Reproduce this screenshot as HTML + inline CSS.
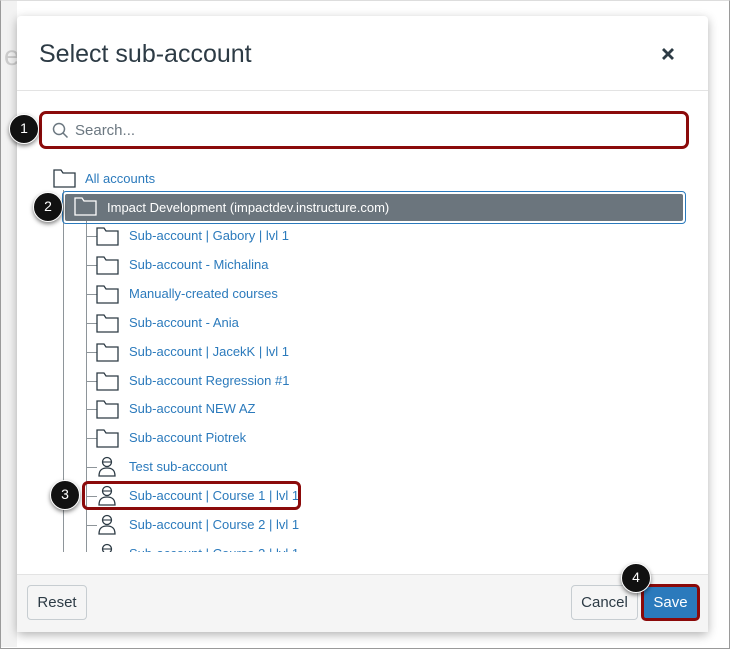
<!DOCTYPE html>
<html><head><style>
*{margin:0;padding:0;box-sizing:border-box}
body{width:730px;height:649px;background:#fff;font-family:"Liberation Sans",sans-serif;position:relative;overflow:hidden}
.frame{position:absolute;left:0;top:0;width:730px;height:649px;border:1px solid #9a9a9a;border-top-color:#ddd}
.bgcol{position:absolute;left:1px;top:1px;width:16px;height:646px;background:#f2f2f2}
.modal{position:absolute;left:17px;top:16px;width:691px;height:616px;background:#fff;border-radius:4px;box-shadow:0 3px 10px rgba(0,0,0,.3);overflow:hidden}
.title{position:absolute;left:22px;top:24px;font-size:25px;color:#2d3b45}
.x{position:absolute;left:644px;top:31px}
.hdiv{position:absolute;left:0;top:74px;width:100%;height:1px;background:#e3e3e3}
.search{position:absolute;left:22px;top:95px;width:650px;height:38px;border:3px solid #8b0a0a;border-radius:7px}
.search span{position:absolute;left:33px;top:8px;font-size:15px;color:#6b7780}
.a{position:absolute;font-size:13px;color:#2b7abc;white-space:nowrap}
.ic{position:absolute}
.vl{position:absolute;width:1px;background:#8e959a}
.hl{position:absolute;height:1px;background:#8e959a}
.badge{position:absolute;width:30px;height:30px;border-radius:50%;background:#111;color:#fff;font-size:14px;text-align:center;line-height:27px;box-shadow:0 2px 4px rgba(0,0,0,.5);border:1.5px solid #fff}
.btn{position:absolute;border:1px solid #c7cdd1;border-radius:4px;background:#f5f5f5;color:#2d3b45;font-size:15px;text-align:center}
</style></head><body>
<div class="bgcol"></div>
<div class="frame"></div>
<div style="position:absolute;left:4px;top:40px;font-size:28px;color:#ccc">e</div>
<div class="modal">
<div class="title">Select sub-account</div>
<svg class="x" width="14" height="14" viewBox="0 0 14 14"><path d="M2 2L12 12M12 2L2 12" stroke="#2d3b45" stroke-width="2.8"/></svg>
<div class="hdiv"></div>
<div class="search"><svg style="position:absolute;left:10px;top:8px" width="17" height="17" viewBox="0 0 17 17"><circle cx="7" cy="7" r="5.5" fill="none" stroke="#6b7780" stroke-width="1.5"/><path d="M11 11L15.5 15.5" stroke="#6b7780" stroke-width="1.5"/></svg><span>Search...</span></div>
</div>
<div class="vl" style="left:63px;top:190px;height:362px"></div>
<div class="vl" style="left:86px;top:220px;height:332px"></div>
<svg class="ic" style="left:53px;top:169px" width="23" height="19" viewBox="0 0 23 19"><path d="M1 18V1H8L10 4H22V18Z" fill="none" stroke="#2d3b45" stroke-width="1.3"/></svg>
<div class="a" style="left:85px;top:171px">All accounts</div>
<div style="position:absolute;left:62px;top:191px;width:624px;height:33px;border:1.5px solid #2b7abc;border-radius:4px"></div>
<div style="position:absolute;left:65px;top:194px;width:618px;height:27px;background:#6b757d;border-radius:2px"></div>
<svg class="ic" style="left:74px;top:197px" width="23" height="19" viewBox="0 0 23 19"><path d="M1 18V1H8L10 4H22V18Z" fill="none" stroke="#fff" stroke-width="1.3"/></svg>
<div class="a" style="left:107px;top:200px;color:#fff">Impact Development (impactdev.instructure.com)</div>
<div id="rows"></div>
<div style="position:absolute;left:17px;top:552px;width:691px;height:22px;background:#fff"></div>
<div class="badge" style="left:9px;top:114px">1</div>
<div class="badge" style="left:33px;top:192px">2</div>
<div class="badge" style="left:50px;top:480px">3</div>
<div style="position:absolute;left:82px;top:481px;width:219px;height:29px;border:3px solid #8b0a0a;border-radius:6px"></div>
<div style="position:absolute;left:17px;top:574px;width:691px;height:58px;background:#f5f5f5;border-top:1px solid #e3e3e3"></div>
<div class="btn" style="left:27px;top:585px;width:60px;height:35px;line-height:33px">Reset</div>
<div class="btn" style="left:571px;top:585px;width:67px;height:35px;line-height:33px">Cancel</div>
<div style="position:absolute;left:641px;top:584px;width:59px;height:37px;border:3px solid #8b0a0a;border-radius:5px;background:#2b7abc;color:#fff;font-size:15px;text-align:center;line-height:31px">Save</div>
<div class="badge" style="left:621px;top:563px">4</div>
<script>
var rows=[["f","Sub-account | Gabory | lvl 1"],["f","Sub-account - Michalina"],["f","Manually-created courses"],["f","Sub-account - Ania"],["f","Sub-account | JacekK | lvl 1"],["f","Sub-account Regression #1"],["f","Sub-account NEW AZ"],["f","Sub-account Piotrek"],["u","Test sub-account"],["u","Sub-account | Course 1 | lvl 1"],["u","Sub-account | Course 2 | lvl 1"],["u","Sub-account | Course 3 | lvl 1"]];
var h="";
rows.forEach(function(r,i){var c=236+i*28.9;
h+='<div class="hl" style="left:86px;top:'+Math.round(c)+'px;width:11px"></div>';
if(r[0]=="f")h+='<svg class="ic" style="left:96px;top:'+Math.round(c-9)+'px" width="23" height="19" viewBox="0 0 23 19"><path d="M1 18V1H8L10 4H22V18Z" fill="#fff" stroke="#2d3b45" stroke-width="1.3"/></svg>';
else h+='<svg class="ic" style="left:97px;top:'+Math.round(c-11)+'px" width="20" height="22" viewBox="0 0 20 22"><circle cx="10" cy="6" r="4.5" fill="#fff" stroke="#2d3b45" stroke-width="1.3"/><path d="M6 6H14" stroke="#2d3b45" stroke-width="1.1"/><path d="M2 20C2 14 5 12 10 12S18 14 18 20Z" fill="#fff" stroke="#2d3b45" stroke-width="1.3"/></svg>';
h+='<div class="a" style="left:129px;top:'+Math.round(c-8)+'px">'+r[1]+'</div>';});
document.getElementById("rows").innerHTML=h;
</script>
</body></html>
